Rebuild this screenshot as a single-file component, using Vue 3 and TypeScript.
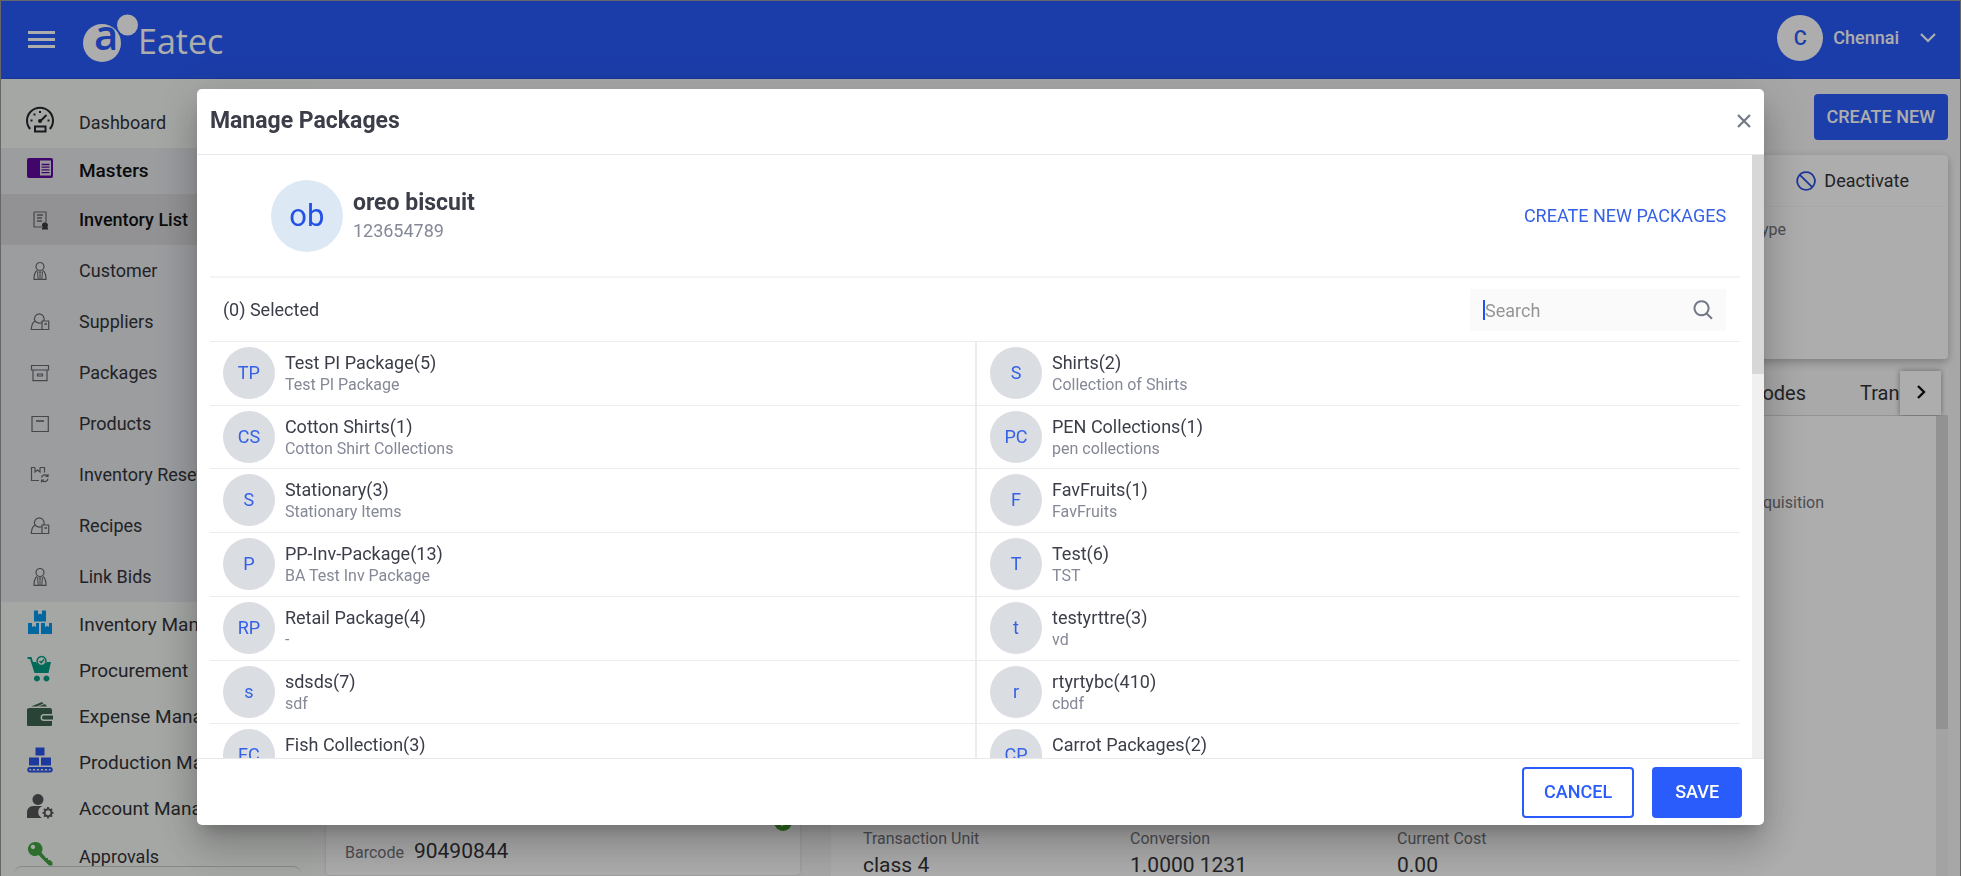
<script setup lang="ts">
import { ref } from 'vue'

interface Shape {
  d: string
  fill?: string
  stroke?: string
  w?: number
}
interface NavItem {
  label: string
  icon: string
}
interface Pack {
  initials: string
  name: string
  note: string
}

const line = (d: string, stroke = '#69696e', w = 1.2): Shape => ({ d, stroke, w })
const solid = (d: string, fill: string): Shape => ({ d, fill })

const person = [
  line('M10 1.5a4 4 0 1 0 0 8a4 4 0 0 0 0-8M7 9.5C5 11 4 14 4 18.3H16C16 14 15 11 13 9.5'),
  line('M7.5 10.5L8.2 18M12.500 10.500L11.800 18M10 11v7M8.500 11h3', '#69696e', 1),
]
const supplier = [
  line('M13.500 9A4.800 4.800 0 1 0 5 9C2.500 10.500 1.500 13 1.300 17.500H18.700V9H12V17.500M5 9C7 11 10 11.500 12 10.500'),
  line('M14.500 12h2.500', '#69696e', 1.6),
]

const icons: Record<string, Shape[]> = {
  dashboard: [
    line('M5 24A13 13 0 1 1 25 24M5 24l-1-2M25 24l1-2', '#26262c', 2),
    line('M15 16.500L21.500 10', '#26262c', 2),
    solid('M13 16a2 2 0 1 0 4 0a2 2 0 1 0-4 0M14 6h2v2h-2zM8.500 8.500h2v2h-2zM5.500 14.500h2v2h-2zM22.500 14.500h2v2h-2z', '#26262c'),
    line('M10 21.500h10.500v5H10z', '#26262c', 2),
  ],
  masters: [
    solid('M4 5H26a2 2 0 0 1 2 2V23a2 2 0 0 1-2 2H4a2 2 0 0 1-2-2V7a2 2 0 0 1 2-2z', '#5f0a9c'),
    solid('M15 7.500H26V22.500H15z', '#e2dcea'),
    line('M16.500 11.500h8M16.500 14.200h8M16.500 16.900h8M16.500 19.600h8', '#5f0a9c', 1.3),
  ],
  inventory: [
    solid('M9 3.500h4v4l2-1 2 1v-4h4v11H9zM3 16h4v4l2-1 2 1v-4h3v11H3zM16 16h4v4l2-1 2 1v-4h3v11H16z', '#0098ee'),
  ],
  procurement: [
    solid('M2.500 4h4l1.500 5h3a6 6 0 0 0 11 0h4l-2.500 11H9.500L5 6H2.500zM12 22.500a3 3 0 1 1-.1 0zM21.500 22.500a3 3 0 1 1-.1 0z', '#009b80'),
    line('M16.500 3.500a4.500 4.500 0 1 0 .1 0M14.500 8l1.700 1.700L19 6.500', '#009b80', 1.5),
  ],
  expense: [
    solid('M4 9H25a2 2 0 0 1 2 2v4H19a3.500 3.500 0 0 0 0 7h8v4a1 1 0 0 1-1 1H3a1 1 0 0 1-1-1V10zM19 16.500h9v4H19a2 2 0 0 1 0-4M6 7.500L17 3l1.500 1.500L12 7.500zM13.500 7.500L20 5l2 2.500z', '#3d6550'),
  ],
  production: [
    solid('M10.500 2.500h9v8h-9zM4 12.500h10v8H4zM16 12.500h10v8H16z', '#2a55e8'),
    line('M5 23h20a1.500 1.500 0 0 1 0 3.500H5A1.500 1.500 0 0 1 5 23', '#2a55e8', 2),
    line('M6 24.800h2M10 24.800h2M14 24.800h2M18 24.800h2M22 24.800h2', '#2a55e8', 1.5),
  ],
  account: [
    solid('M13 3a5.500 5.500 0 1 1-.1 0M8 15h9.500A6.500 6.500 0 0 0 17 27H2v-6a6 6 0 0 1 6-6z', '#555558'),
    line('M23 18.300a3.500 3.500 0 1 0 .1 0', '#555558', 2),
    line('M23 16v2M23 25.500v2M17.500 21.800h2M26.500 21.800h2M19 18l1.300 1.300M25.600 24.300L27 25.700M27 18l-1.300 1.300M20.400 24.300L19 25.700', '#555558', 1.8),
  ],
  approvals: [
    { d: 'M10 3a7 7 0 1 0 3.500 13L24 26.500h3.500v-3.300L25 21h-2v-2h-2L16.500 13.500A7 7 0 0 0 10 3M8 5.800a2.200 2.200 0 1 1-.1 0z', fill: '#43a344' },
  ],
  list: [
    line('M4 2h12v10M4 2v15h8'),
    line('M7 5h6M7 8h5M7 11h5', '#69696e', 1.4),
    solid('M15 12.200a3 3 0 1 1-.1 0M12 17.500h6v2h-6z', '#3c3c40'),
  ],
  customer: person,
  suppliers: supplier,
  packages: [line('M1.500 2.500H18.500V7H1.500zM3 7V17.700H17V7M7.500 11h5v2h-5z')],
  products: [line('M2 2.500H18.300V17.500H2z'), line('M6 7h8', '#3c3c40', 1.2)],
  reset: [
    line('M9 15.500H1.500V2.500H5M5 2.500V7L7.500 5 10 7V2.500M10 2.500H14.500V7.500'),
    line('M11.500 12.500A3.500 3.500 0 0 1 17.500 11M18 9v2.500h-2.500M18 13.500A3.500 3.500 0 0 1 12 15.500M11.500 17.500V15H14'),
  ],
}

const subItems: NavItem[] = [
  { label: 'Inventory List', icon: 'list' },
  { label: 'Customer', icon: 'customer' },
  { label: 'Suppliers', icon: 'suppliers' },
  { label: 'Packages', icon: 'packages' },
  { label: 'Products', icon: 'products' },
  { label: 'Inventory Reset', icon: 'reset' },
  { label: 'Recipes', icon: 'suppliers' },
  { label: 'Link Bids', icon: 'customer' },
]
const items: NavItem[] = [
  { label: 'Inventory Management', icon: 'inventory' },
  { label: 'Procurement', icon: 'procurement' },
  { label: 'Expense Management', icon: 'expense' },
  { label: 'Production Management', icon: 'production' },
  { label: 'Account Management', icon: 'account' },
  { label: 'Approvals', icon: 'approvals' },
]
const packs: Pack[] = [
  { initials: 'TP', name: 'Test PI Package(5)', note: 'Test PI Package' },
  { initials: 'S', name: 'Shirts(2)', note: 'Collection of Shirts' },
  { initials: 'CS', name: 'Cotton Shirts(1)', note: 'Cotton Shirt Collections' },
  { initials: 'PC', name: 'PEN Collections(1)', note: 'pen collections' },
  { initials: 'S', name: 'Stationary(3)', note: 'Stationary Items' },
  { initials: 'F', name: 'FavFruits(1)', note: 'FavFruits' },
  { initials: 'P', name: 'PP-Inv-Package(13)', note: 'BA Test Inv Package' },
  { initials: 'T', name: 'Test(6)', note: 'TST' },
  { initials: 'RP', name: 'Retail Package(4)', note: '-' },
  { initials: 't', name: 'testyrttre(3)', note: 'vd' },
  { initials: 's', name: 'sdsds(7)', note: 'sdf' },
  { initials: 'r', name: 'rtyrtybc(410)', note: 'cbdf' },
  { initials: 'FC', name: 'Fish Collection(3)', note: 'Fish' },
  { initials: 'CP', name: 'Carrot Packages(2)', note: 'Carrot' },
]
const metrics = [
  { label: 'Transaction Unit', value: 'class 4' },
  { label: 'Conversion', value: '1.0000 1231' },
  { label: 'Current Cost', value: '0.00' },
]
const query = ref('')
</script>

<template>
  <div class="app">
    <header class="topbar">
      <button class="menu" type="button" aria-label="Menu"><span></span><span></span><span></span></button>
      <a class="brand" href="#" aria-label="Eatec home">
        <svg width="56" height="50" viewBox="0 0 56 50" aria-hidden="true">
          <circle cx="20" cy="30" r="19" fill="#fff" />
          <text class="mark" x="12" y="37">a</text>
          <circle cx="45.500" cy="12" r="11.500" fill="#295af9" />
          <circle cx="45.500" cy="12" r="10.500" fill="#fff" />
        </svg>
        <span class="wordmark">Eatec</span>
      </a>
      <button class="account" type="button">
        <span class="account-dot">C</span>
        <span>Chennai</span>
        <svg width="18" height="12" viewBox="0 0 18 12" aria-hidden="true">
          <path d="M2 2l7 7 7-7" fill="none" stroke="#fff" stroke-width="2.200" />
        </svg>
      </button>
    </header>

    <div class="below">
      <nav class="sidebar">
        <a class="item first" href="#">
          <svg class="icon" viewBox="0 0 30 30" aria-hidden="true">
            <path v-for="(s, i) in icons.dashboard" :key="i" :d="s.d" :fill="s.fill ?? 'none'" :stroke="s.stroke ?? 'none'" :stroke-width="s.w" />
          </svg>
          <span>Dashboard</span>
        </a>
        <div class="group">
          <a class="item major strong" href="#">
            <svg class="icon" viewBox="0 0 30 30" aria-hidden="true">
              <path v-for="(s, i) in icons.masters" :key="i" :d="s.d" :fill="s.fill ?? 'none'" :stroke="s.stroke ?? 'none'" :stroke-width="s.w" />
            </svg>
            <span>Masters</span>
          </a>
          <a v-for="(n, k) in subItems" :key="n.label" class="item sub" :class="{ current: k === 0 }" href="#">
            <svg class="icon small" viewBox="0 0 20 20" aria-hidden="true">
              <path v-for="(s, i) in icons[n.icon]" :key="i" :d="s.d" :fill="s.fill ?? 'none'" :stroke="s.stroke ?? 'none'" :stroke-width="s.w" />
            </svg>
            <span>{{ n.label }}</span>
          </a>
        </div>
        <a v-for="(n, k) in items" :key="n.label" class="item" :class="k < items.length - 1 ? 'major' : 'last'" href="#">
          <svg class="icon" viewBox="0 0 30 30" aria-hidden="true">
            <path v-for="(s, i) in icons[n.icon]" :key="i" :d="s.d" :fill="s.fill ?? 'none'" fill-rule="evenodd" :stroke="s.stroke ?? 'none'" :stroke-width="s.w" />
          </svg>
          <span>{{ n.label }}</span>
        </a>
        <div class="tray"></div>
      </nav>

      <main class="main">
        <div class="toolbar"><button class="btn solid create" type="button">CREATE NEW</button></div>
        <section class="summary">
          <div class="summary-head">
            <button class="deactivate" type="button">
              <svg width="20" height="20" viewBox="0 0 20 20" aria-hidden="true">
                <path d="M10 1.200a8.800 8.800 0 1 0 .1 0M3.800 3.800L16.200 16.200" fill="none" stroke="#2b50e0" stroke-width="1.800" />
              </svg>
              <span>Deactivate</span>
            </button>
          </div>
          <p class="label kind">Type</p>
        </section>
        <div class="split">
          <section class="card">
            <div class="done">
              <svg width="18" height="18" viewBox="0 0 18 18" aria-hidden="true">
                <circle cx="9" cy="9" r="9" fill="#43a02b" />
                <path d="M5 9l3 3 5-6" fill="none" stroke="#fff" stroke-width="2" />
              </svg>
            </div>
            <p class="code"><span class="label">Barcode</span><span class="value">90490844</span></p>
          </section>
          <section class="panel">
            <div class="tabs">
              <div class="tab-list">
                <button class="tab" type="button">Barcodes</button>
                <button class="tab cut" type="button">Transactions</button>
              </div>
              <button class="next" type="button" aria-label="More tabs">
                <svg width="12" height="16" viewBox="0 0 12 16" aria-hidden="true">
                  <path d="M3 2l6 6-6 6" fill="none" stroke="#111" stroke-width="2.400" />
                </svg>
              </button>
            </div>
            <div class="panel-body">
              <div class="panel-content">
                <p class="label acquire">Requisition</p>
                <dl class="metrics">
                  <div v-for="m in metrics" :key="m.label">
                    <dt class="label">{{ m.label }}</dt>
                    <dd class="value">{{ m.value }}</dd>
                  </div>
                </dl>
              </div>
              <div class="rail"><div class="thumb tall"></div></div>
            </div>
          </section>
        </div>
      </main>
    </div>

    <div class="overlay">
      <section class="dialog" role="dialog" aria-modal="true" aria-labelledby="dialog-title">
        <header class="dialog-head">
          <h2 id="dialog-title">Manage Packages</h2>
          <button class="close" type="button" aria-label="Close">
            <svg width="16" height="16" viewBox="0 0 16 16" aria-hidden="true">
              <path d="M2 2l12 12M14 2L2 14" fill="none" stroke="#737887" stroke-width="2.200" />
            </svg>
          </button>
        </header>
        <div class="dialog-body">
          <div class="scroller">
            <div class="product">
              <span class="product-dot">ob</span>
              <div class="product-text">
                <h3>oreo biscuit</h3>
                <p>123654789</p>
              </div>
              <a class="new-link" href="#">CREATE NEW PACKAGES</a>
            </div>
            <div class="filter">
              <span>(0) Selected</span>
              <label class="search">
                <span class="caret"></span>
                <input v-model="query" type="text" placeholder="Search" aria-label="Search packages" />
                <svg width="20" height="20" viewBox="0 0 20 20" aria-hidden="true">
                  <path d="M8.500 1.300a7 7 0 1 0 .1 0M13.500 13.500L19 18.800" fill="none" stroke="#737887" stroke-width="2" />
                </svg>
              </label>
            </div>
            <ul class="packs">
              <li v-for="p in packs" :key="p.name">
                <span class="pack-dot">{{ p.initials }}</span>
                <div>
                  <p class="pack-name">{{ p.name }}</p>
                  <p class="pack-note">{{ p.note }}</p>
                </div>
              </li>
            </ul>
          </div>
          <div class="rail"><div class="thumb"></div></div>
        </div>
        <footer class="dialog-foot">
          <button class="btn outline" type="button">CANCEL</button>
          <button class="btn solid" type="button">SAVE</button>
        </footer>
      </section>
    </div>
  </div>
</template>

<style>
body {
  margin: 0;
}
</style>

<style scoped>
* {
  box-sizing: border-box;
}
p, h2, h3, ul, dl, dd {
  margin: 0;
  padding: 0;
}
button {
  font: inherit;
  color: inherit;
  background: none;
  border: 0;
  padding: 0;
}
a {
  color: inherit;
  text-decoration: none;
}
.app {
  height: 100vh;
  overflow: hidden;
  display: flex;
  flex-direction: column;
  border: 1px solid #999;
  border-bottom: 0;
  background: #f7f7f7;
  color: #333338;
  font: 18px/24px Roboto, sans-serif;
}
.topbar {
  flex: none;
  height: 78px;
  display: flex;
  align-items: center;
  padding: 0 23px 3px 27px;
  background: #295af9;
  border-bottom: 1px solid #2450dc;
  color: #fff;
}
.menu {
  display: grid;
  gap: 4px;
  width: 27px;
  margin-top: 2px;
}
.menu span {
  height: 3px;
  background: #fff;
}
.brand {
  display: flex;
  align-items: center;
  margin-left: 27px;
}
.mark {
  font: 600 42px "Open Sans", sans-serif;
  fill: #295af9;
}
.wordmark {
  padding-top: 6px;
  font: 400 34px/50px "Open Sans", sans-serif;
}
.account {
  display: flex;
  align-items: center;
  margin-left: auto;
  font-weight: 500;
}
.account-dot {
  width: 46px;
  height: 46px;
  margin-right: 10px;
  border-radius: 50%;
  background: #fff;
  color: #295af9;
  font-size: 20px;
  line-height: 46px;
}
.account svg {
  margin-left: 20px;
}
.below {
  flex: 1;
  min-height: 0;
  display: flex;
}
.sidebar {
  position: relative;
  flex: none;
  width: 311px;
  background: #f4f7f4;
  white-space: nowrap;
  overflow: hidden;
}
.item {
  display: flex;
  align-items: center;
  height: 46px;
  padding-left: 24px;
}
.item.first {
  margin: 21px 0 2px;
}
.item.major {
  font-size: 19px;
}
.item.last {
  margin-top: 2px;
}
.icon {
  flex: none;
  width: 30px;
  height: 30px;
  margin: 0 24px 6px 0;
}
.icon.small {
  width: 20px;
  height: 20px;
  margin: 0 29px 0 5px;
}
.group {
  background: #e5e7eb;
}
.item.sub {
  height: 51px;
}
.strong,
.current {
  font-weight: 500;
  color: #111;
}
.current {
  background: #d8d8db;
}
.tray {
  position: absolute;
  left: 13px;
  right: 11px;
  bottom: 0;
  height: 10px;
  border-top: 1px solid #c8cacd;
  border-radius: 8px 8px 0 0;
  background: #f4f7f4;
}
.main {
  flex: 1;
  min-width: 0;
  display: flex;
  flex-direction: column;
  padding: 15px 12px 0 14px;
}
.toolbar {
  display: flex;
  justify-content: flex-end;
  margin-bottom: 15px;
}
.btn {
  height: 51px;
  padding: 0 23px;
  border-radius: 4px;
  font-weight: 500;
}
.solid {
  background: #295cfb;
  color: #fff;
}
.outline {
  padding: 0 20px;
  border: 2px solid #295cfb;
  color: #295cfb;
}
.btn.create {
  height: 46px;
  padding: 0 13px;
}
.summary {
  height: 204px;
  background: #fff;
  border-radius: 4px;
  box-shadow: 0 3px 8px rgba(0, 0, 0, 0.25);
}
.summary-head {
  display: flex;
  justify-content: flex-end;
  height: 52px;
  padding-right: 39px;
  border-bottom: 1px solid #f9f9f9;
}
.deactivate {
  display: flex;
  align-items: center;
  gap: 8px;
}
.label {
  font-size: 16px;
  line-height: 20px;
  color: #73737b;
}
.kind {
  padding: 13px 162px 0 0;
  text-align: right;
}
.split {
  flex: 1;
  min-height: 0;
  display: grid;
  grid-template-columns: 474fr 1136fr;
  gap: 12px;
  margin-top: 12px;
}
.card {
  display: flex;
  flex-direction: column;
  justify-content: flex-end;
  margin-bottom: 1px;
  padding: 0 8px 12px 19px;
  background: #fff;
  border-radius: 4px;
  box-shadow: 0 0 3px rgba(0, 0, 0, 0.15);
}
.done {
  display: flex;
  justify-content: flex-end;
  margin-bottom: 8px;
}
.code {
  display: flex;
  align-items: baseline;
  gap: 10px;
}
.value {
  font-size: 21px;
  line-height: 24px;
}
.panel {
  min-width: 0;
  display: flex;
  flex-direction: column;
}
.tabs {
  flex: none;
  display: flex;
  justify-content: flex-end;
  height: 45px;
  padding-right: 7px;
  border-bottom: 1px solid #dadada;
  background: #fafafa;
  font-size: 20px;
}
.tab-list {
  display: flex;
  gap: 54px;
}
.tab.cut {
  width: 40px;
  overflow: hidden;
  text-align: left;
}
.next {
  width: 41px;
  background: #fff;
  box-shadow: 0 0 6px rgba(0, 0, 0, 0.4);
}
.panel-body {
  flex: 1;
  min-height: 0;
  display: flex;
  padding-left: 19px;
}
.panel-content {
  flex: 1;
  display: flex;
  flex-direction: column;
  justify-content: space-between;
  padding: 77px 0 0 32px;
  background: #fff;
}
.acquire {
  padding-right: 112px;
  text-align: right;
}
.metrics {
  display: flex;
}
.metrics > div {
  width: 267px;
  height: 47px;
}
.metrics .value {
  padding-top: 4px;
}
.rail {
  flex: none;
  width: 12px;
  background: #f0f0f0;
}
.thumb {
  height: calc(100% * 4 / 11);
  background: #d7d7d7;
}
.thumb.tall {
  height: 68%;
}
.overlay {
  position: fixed;
  inset: 0;
  display: flex;
  justify-content: center;
  padding: 89px 1px 51px;
  background: rgba(0, 0, 0, 0.32);
}
.dialog {
  width: 80%;
  display: flex;
  flex-direction: column;
  overflow: hidden;
  border-radius: 5px;
  background: #fff;
  color: #3b3d49;
  box-shadow: 0 11px 15px -7px rgba(0, 0, 0, 0.2), 0 24px 38px 3px rgba(0, 0, 0, 0.14), 0 9px 46px 8px rgba(0, 0, 0, 0.12);
}
.dialog-head {
  flex: none;
  display: flex;
  align-items: center;
  justify-content: space-between;
  height: 66px;
  padding: 0 12px 2px 13px;
  border-bottom: 1px solid #e8e8ea;
}
h2,
h3 {
  font-size: 23px;
  line-height: 28px;
  font-weight: 700;
}
.close {
  display: flex;
}
.dialog-body {
  flex: 1;
  min-height: 0;
  display: flex;
}
.scroller {
  flex: 1;
  overflow: hidden;
  padding: 0 12px 0 13px;
}
.product {
  display: flex;
  align-items: center;
  height: 123px;
  padding: 0 14px 0 61px;
  border-bottom: 2px solid #f4f4f6;
}
.product-dot {
  width: 72px;
  height: 72px;
  margin-right: 10px;
  border-radius: 50%;
  background: #dce8f4;
  color: #2452e6;
  font-size: 31px;
  line-height: 72px;
  text-align: center;
}
.product-text {
  padding-top: 2px;
}
.product-text p {
  color: #858896;
  line-height: 28px;
}
.new-link {
  margin-left: auto;
  color: #3561e6;
}
.filter {
  display: flex;
  align-items: center;
  justify-content: space-between;
  height: 64px;
  padding: 0 14px 0 13px;
  border-bottom: 1px solid #ececef;
}
.search {
  display: flex;
  align-items: center;
  width: 256px;
  height: 42px;
  padding: 0 13px;
  background: #fafafa;
}
.caret {
  width: 2px;
  height: 20px;
  background: #1f50f5;
}
.search input {
  flex: 1;
  min-width: 0;
  padding: 2px 0 0;
  border: 0;
  outline: 0;
  background: none;
  font: inherit;
}
.search input::placeholder {
  color: #959595;
}
.packs {
  display: grid;
  grid-template-columns: 1fr 1fr;
  grid-auto-rows: 1fr;
  min-height: 446px;
  list-style: none;
}
.packs li {
  display: flex;
  gap: 10px;
  padding: 5px 0 5px 13px;
  border-bottom: 1px solid #ececef;
}
.packs li:nth-child(even) {
  border-left: 2px solid #ececef;
}
.pack-dot {
  flex: none;
  width: 52px;
  height: 52px;
  border-radius: 50%;
  background: #dadde2;
  color: #3561e6;
  line-height: 52px;
  text-align: center;
}
.pack-name {
  line-height: 24px;
  padding-top: 4px;
}
.pack-note {
  font-size: 16px;
  line-height: 20px;
  color: #858896;
}
.dialog-foot {
  flex: none;
  display: flex;
  align-items: center;
  justify-content: flex-end;
  gap: 18px;
  height: 67px;
  padding: 0 22px;
  border-top: 1px solid #e8e8ea;
}
</style>
